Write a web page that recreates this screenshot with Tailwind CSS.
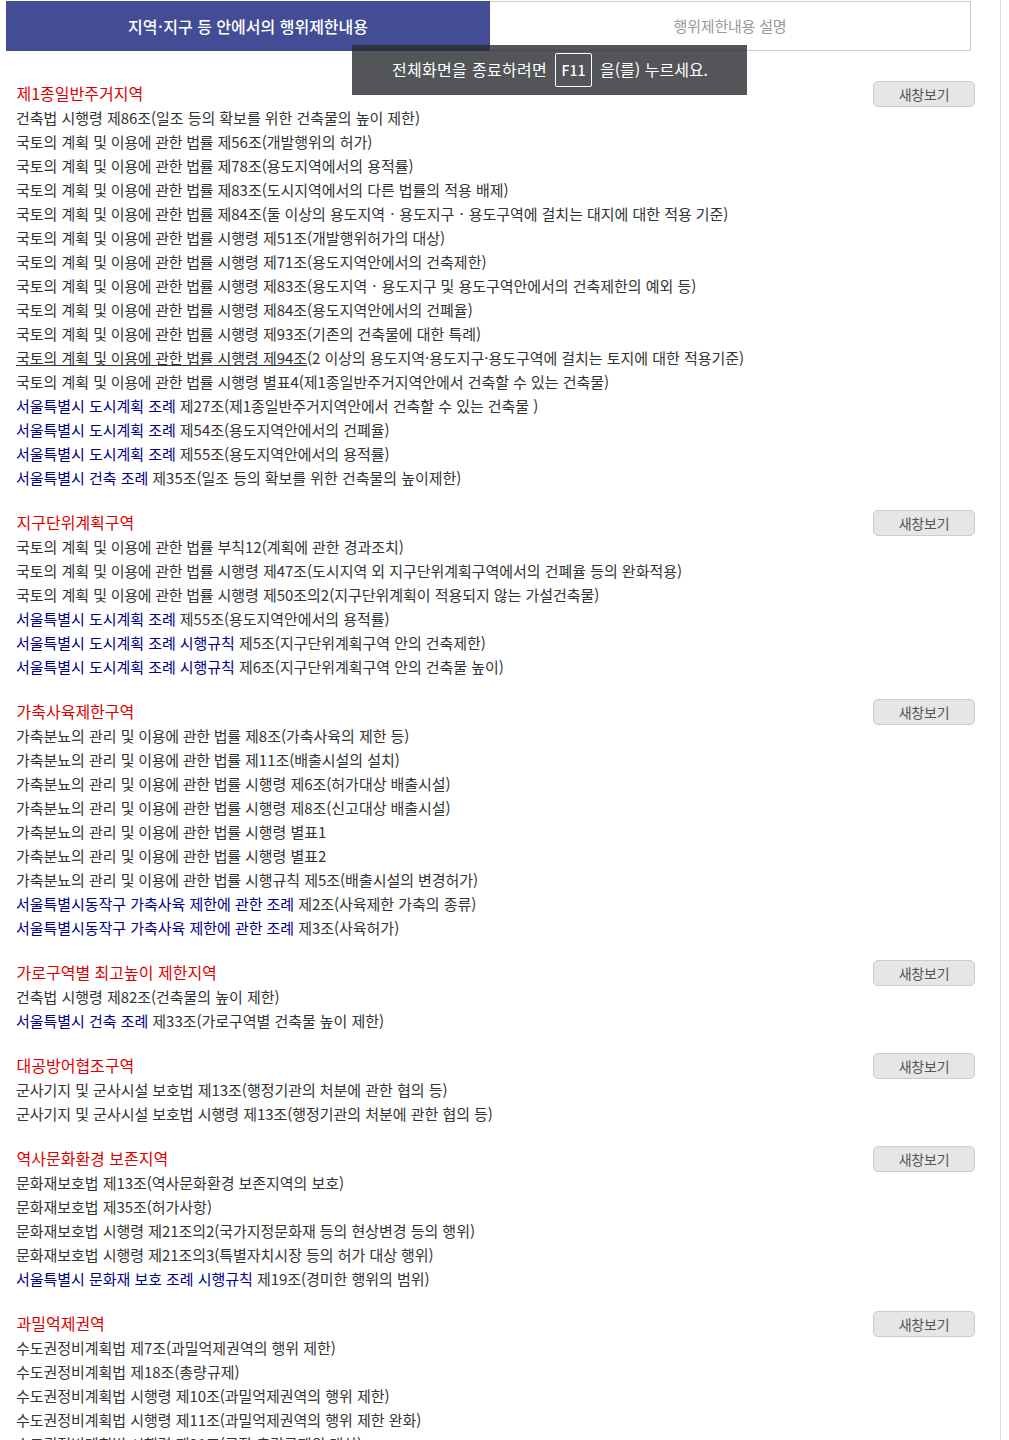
<!DOCTYPE html>
<html lang="ko"><head><meta charset="utf-8"><script src="https://cdn.jsdelivr.net/npm/@tailwindcss/browser@4"></script></head>
<body class="bg-white">
<div class="relative h-[1440px] w-[1009px] overflow-hidden font-['Noto_Sans_CJK_KR','Noto_Sans',sans-serif] text-[15px] leading-6 tracking-[-0.04px] text-[#333]">
<div class="absolute right-[8px] top-0 h-full w-px bg-[#ddd]"></div>
<div class="ml-[6px] mt-px flex h-[50px] w-[965px]">
<div class="flex w-[484px] items-center justify-center bg-[#434d95] text-base font-medium tracking-normal text-white"><span>지역<span class="mx-[0.5px]">·</span>지구 등 안에서의 행위제한내용</span></div>
<div class="flex flex-1 items-center justify-center border border-l-0 border-[#ccc] tracking-[-0.2px] text-[#999]">행위제한내용 설명</div>
</div>
<div class="absolute left-[352px] top-[45px] flex h-[50px] w-[395px] items-center gap-[8px] bg-[#282b30]/80 pl-[40px] text-base tracking-[0.3px] text-white"><span class="mb-[3px]">전체화면을 종료하려면</span><span class="flex h-[34px] w-[37px] items-center justify-center rounded-[2px] border border-white text-sm font-medium tracking-normal">F11</span><span class="mb-[3px] tracking-normal">을(를) 누르세요.</span></div>
<div class="ml-[16px] mr-[34px] mt-[31px] flex flex-col gap-[21px]">

<section class="relative"><h2 class="pb-[2px] pl-[0.5px] text-base leading-[22px] font-normal tracking-normal text-[#d00]">제1종일반주거지역</h2><button class="absolute right-0 top-[-1px] h-[26px] w-[102px] rounded-[5px] border border-[#ccc] bg-[#e6e6e6] pb-px text-sm tracking-[-0.2px] text-[#555]">새창보기</button>
<p>건축법 시행령 제86조(일조 등의 확보를 위한 건축물의 높이 제한)</p>
<p>국토의 계획 <span class="tracking-[-0.25px]">및 이용에 관한 법률</span> 제56조(개발행위의 허가)</p>
<p>국토의 계획 <span class="tracking-[-0.25px]">및 이용에 관한 법률</span> 제78조(용도지역에서의 용적률)</p>
<p>국토의 계획 <span class="tracking-[-0.25px]">및 이용에 관한 법률</span> 제83조(도시지역에서의 다른 법률의 적용 배제)</p>
<p>국토의 계획 <span class="tracking-[-0.25px]">및 이용에 관한 법률</span> 제84조(둘 이상의 용도지역 <span class="mx-[0.9px]">·</span> 용도지구 <span class="mx-[0.9px]">·</span> 용도구역에 걸치는 대지에 대한 적용 기준)</p>
<p>국토의 계획 <span class="tracking-[-0.25px]">및 이용에 관한 법률</span> 시행령 제51조(개발행위허가의 대상)</p>
<p>국토의 계획 <span class="tracking-[-0.25px]">및 이용에 관한 법률</span> 시행령 제71조(용도지역안에서의 건축제한)</p>
<p>국토의 계획 <span class="tracking-[-0.25px]">및 이용에 관한 법률</span> 시행령 제83조(용도지역 <span class="mx-[0.9px]">·</span> 용도지구 및 용도구역안에서의 건축제한의 예외 등)</p>
<p>국토의 계획 <span class="tracking-[-0.25px]">및 이용에 관한 법률</span> 시행령 제84조(용도지역안에서의 건폐율)</p>
<p>국토의 계획 <span class="tracking-[-0.25px]">및 이용에 관한 법률</span> 시행령 제93조(기존의 건축물에 대한 특례)</p>
<p><span class="underline">국토의 계획 <span class="tracking-[-0.25px]">및 이용에 관한 법률</span> 시행령 제94조</span>(2 이상의 용도지역·용도지구·용도구역에 걸치는 토지에 대한 적용기준)</p>
<p>국토의 계획 <span class="tracking-[-0.25px]">및 이용에 관한 법률</span> 시행령 별표4(제1종일반주거지역안에서 건축할 수 있는 건축물)</p>
<p><a class="text-[#00008b]">서울특별시 도시계획 조례</a> 제27조(제1종일반주거지역안에서 건축할 수 있는 건축물 )</p>
<p><a class="text-[#00008b]">서울특별시 도시계획 조례</a> 제54조(용도지역안에서의 건폐율)</p>
<p><a class="text-[#00008b]">서울특별시 도시계획 조례</a> 제55조(용도지역안에서의 용적률)</p>
<p><a class="text-[#00008b]">서울특별시 건축 조례</a> 제35조(일조 등의 확보를 위한 건축물의 높이제한)</p>
</section>

<section class="relative"><h2 class="pb-[2px] pl-[0.5px] text-base leading-[22px] font-normal tracking-normal text-[#d00]">지구단위계획구역</h2><button class="absolute right-0 top-[-1px] h-[26px] w-[102px] rounded-[5px] border border-[#ccc] bg-[#e6e6e6] pb-px text-sm tracking-[-0.2px] text-[#555]">새창보기</button>
<p>국토의 계획 <span class="tracking-[-0.25px]">및 이용에 관한 법률</span> 부칙12(계획에 관한 경과조치)</p>
<p>국토의 계획 <span class="tracking-[-0.25px]">및 이용에 관한 법률</span> 시행령 제47조(도시지역 외 지구단위계획구역에서의 건폐율 등의 완화적용)</p>
<p>국토의 계획 <span class="tracking-[-0.25px]">및 이용에 관한 법률</span> 시행령 제50조의2(지구단위계획이 적용되지 않는 가설건축물)</p>
<p><a class="text-[#00008b]">서울특별시 도시계획 조례</a> 제55조(용도지역안에서의 용적률)</p>
<p><a class="text-[#00008b]">서울특별시 도시계획 조례 시행규칙</a> 제5조(지구단위계획구역 안의 건축제한)</p>
<p><a class="text-[#00008b]">서울특별시 도시계획 조례 시행규칙</a> 제6조(지구단위계획구역 안의 건축물 높이)</p>
</section>

<section class="relative"><h2 class="pb-[2px] pl-[0.5px] text-base leading-[22px] font-normal tracking-normal text-[#d00]">가축사육제한구역</h2><button class="absolute right-0 top-[-1px] h-[26px] w-[102px] rounded-[5px] border border-[#ccc] bg-[#e6e6e6] pb-px text-sm tracking-[-0.2px] text-[#555]">새창보기</button>
<p>가축분뇨의 관리 <span class="tracking-[-0.25px]">및 이용에 관한 법률</span> 제8조(가축사육의 제한 등)</p>
<p>가축분뇨의 관리 <span class="tracking-[-0.25px]">및 이용에 관한 법률</span> 제11조(배출시설의 설치)</p>
<p>가축분뇨의 관리 <span class="tracking-[-0.25px]">및 이용에 관한 법률</span> 시행령 제6조(허가대상 배출시설)</p>
<p>가축분뇨의 관리 <span class="tracking-[-0.25px]">및 이용에 관한 법률</span> 시행령 제8조(신고대상 배출시설)</p>
<p>가축분뇨의 관리 <span class="tracking-[-0.25px]">및 이용에 관한 법률</span> 시행령 별표1</p>
<p>가축분뇨의 관리 <span class="tracking-[-0.25px]">및 이용에 관한 법률</span> 시행령 별표2</p>
<p>가축분뇨의 관리 <span class="tracking-[-0.25px]">및 이용에 관한 법률</span> 시행규칙 제5조(배출시설의 변경허가)</p>
<p><a class="text-[#00008b]">서울특별시동작구 가축사육 제한에 관한 조례</a> 제2조(사육제한 가축의 종류)</p>
<p><a class="text-[#00008b]">서울특별시동작구 가축사육 제한에 관한 조례</a> 제3조(사육허가)</p>
</section>

<section class="relative"><h2 class="pb-[2px] pl-[0.5px] text-base leading-[22px] font-normal tracking-normal text-[#d00]">가로구역별 최고높이 제한지역</h2><button class="absolute right-0 top-[-1px] h-[26px] w-[102px] rounded-[5px] border border-[#ccc] bg-[#e6e6e6] pb-px text-sm tracking-[-0.2px] text-[#555]">새창보기</button>
<p>건축법 시행령 제82조(건축물의 높이 제한)</p>
<p><a class="text-[#00008b]">서울특별시 건축 조례</a> 제33조(가로구역별 건축물 높이 제한)</p>
</section>

<section class="relative"><h2 class="pb-[2px] pl-[0.5px] text-base leading-[22px] font-normal tracking-normal text-[#d00]">대공방어협조구역</h2><button class="absolute right-0 top-[-1px] h-[26px] w-[102px] rounded-[5px] border border-[#ccc] bg-[#e6e6e6] pb-px text-sm tracking-[-0.2px] text-[#555]">새창보기</button>
<p>군사기지 및 군사시설 보호법 제13조(행정기관의 처분에 관한 협의 등)</p>
<p>군사기지 및 군사시설 보호법 시행령 제13조(행정기관의 처분에 관한 협의 등)</p>
</section>

<section class="relative"><h2 class="pb-[2px] pl-[0.5px] text-base leading-[22px] font-normal tracking-normal text-[#d00]">역사문화환경 보존지역</h2><button class="absolute right-0 top-[-1px] h-[26px] w-[102px] rounded-[5px] border border-[#ccc] bg-[#e6e6e6] pb-px text-sm tracking-[-0.2px] text-[#555]">새창보기</button>
<p>문화재보호법 제13조(역사문화환경 보존지역의 보호)</p>
<p>문화재보호법 제35조(허가사항)</p>
<p>문화재보호법 시행령 제21조의2(국가지정문화재 등의 현상변경 등의 행위)</p>
<p>문화재보호법 시행령 제21조의3(특별자치시장 등의 허가 대상 행위)</p>
<p><a class="text-[#00008b]">서울특별시 문화재 보호 조례 시행규칙</a> 제19조(경미한 행위의 범위)</p>
</section>

<section class="relative"><h2 class="pb-[2px] pl-[0.5px] text-base leading-[22px] font-normal tracking-normal text-[#d00]">과밀억제권역</h2><button class="absolute right-0 top-[-1px] h-[26px] w-[102px] rounded-[5px] border border-[#ccc] bg-[#e6e6e6] pb-px text-sm tracking-[-0.2px] text-[#555]">새창보기</button>
<p>수도권정비계획법 제7조(과밀억제권역의 행위 제한)</p>
<p>수도권정비계획법 제18조(총량규제)</p>
<p>수도권정비계획법 시행령 제10조(과밀억제권역의 행위 제한)</p>
<p>수도권정비계획법 시행령 제11조(과밀억제권역의 행위 제한 완화)</p>
<p>수도권정비계획법 시행령 제21조(공장 총량규제의 대상)</p>
</section>
</div>
</div>
</body></html>
